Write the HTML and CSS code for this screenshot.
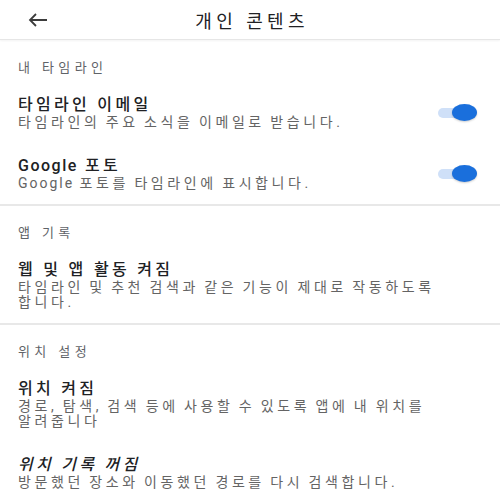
FILE: index.html
```html
<!DOCTYPE html>
<html lang="ko">
<head>
<meta charset="utf-8">
<link rel="stylesheet" href="styles.css">
</head>
<body>
<header class="appbar">
  <div class="back">
    <svg width="20" height="14" viewBox="0 0 20 14"><path d="M19 7H2M8 1L2 7l6 6" fill="none" stroke="#3c3c3c" stroke-width="1.8"/></svg>
  </div>
  <div class="title">개인 콘텐츠</div>
  <div></div>
</header>

<section class="section first">
  <div class="label">내 타임라인</div>
  <div class="item">
    <div class="text">
      <div class="item-title">타임라인 이메일</div>
      <div class="item-sub">타임라인의 주요 소식을 이메일로 받습니다.</div>
    </div>
    <div class="switch"><span class="track"></span><span class="thumb"></span></div>
  </div>
  <div class="item">
    <div class="text">
      <div class="item-title"><span class="latin">Google</span> 포토</div>
      <div class="item-sub"><span class="latin-sub">Google</span> 포토를 타임라인에 표시합니다.</div>
    </div>
    <div class="switch"><span class="track"></span><span class="thumb"></span></div>
  </div>
</section>

<section class="section">
  <div class="label">앱 기록</div>
  <div class="item">
    <div class="text">
      <div class="item-title">웹 및 앱 활동 켜짐</div>
      <div class="item-sub">타임라인 및 추천 검색과 같은 기능이 제대로 작동하도록<br>합니다.</div>
    </div>
  </div>
</section>

<section class="section">
  <div class="label">위치 설정</div>
  <div class="item">
    <div class="text">
      <div class="item-title">위치 켜짐</div>
      <div class="item-sub">경로, 탐색, 검색 등에 사용할 수 있도록 앱에 내 위치를<br>알려줍니다</div>
    </div>
  </div>
  <div class="item">
    <div class="text">
      <div class="item-title italic">위치 기록 꺼짐</div>
      <div class="item-sub">방문했던 장소와 이동했던 경로를 다시 검색합니다.</div>
    </div>
  </div>
</section>
</body>
</html>
```
FILE: styles.css
```css
html, body {
  margin: 0;
  padding: 0;
  background: #ffffff;
  font-family: Roboto, "Noto Sans CJK KR", sans-serif;
  color: #202124;
  width: 500px;
  height: 500px;
  overflow: hidden;
}
.appbar {
  display: grid;
  grid-template-columns: 1fr auto 1fr;
  align-items: center;
  height: 39px;
  border-bottom: 1px solid #e6e6e6;
  box-shadow: 0 1px 2px rgba(0,0,0,0.05);
}
.back {
  padding-left: 28px;
  display: flex;
  align-items: center;
  padding-top: 1px;
}
.title {
  font-size: 18px;
  letter-spacing: 4.4px;
  margin-right: -4.4px;
  color: #202124;
}
.section {
  padding: 18px 18px 0 18px;
  border-bottom: 2px solid #e8e8e8;
}
.section.first {
  padding-top: 19px;
}
.section:last-child {
  border-bottom: none;
}
.label {
  font-size: 13px;
  color: #5f6368;
  letter-spacing: 4.4px;
  line-height: 18px;
  margin-bottom: 18px;
}
.item {
  display: flex;
  align-items: center;
  justify-content: space-between;
  padding-bottom: 26px;
}
.item:last-child {
  padding-bottom: 13px;
}
.item-title {
  font-size: 16px;
  font-weight: 500;
  line-height: 20px;
  letter-spacing: 3.3px;
  color: #202124;
}
.item-title .latin {
  letter-spacing: 1.5px;
}
.item-title.italic {
  font-style: italic;
}
.item-sub {
  font-size: 14px;
  line-height: 15px;
  letter-spacing: 3.6px;
  word-spacing: -1.7px;
  color: #646464;
}
.item-sub .latin-sub {
  letter-spacing: 2px;
}
.switch {
  position: relative;
  width: 40px;
  height: 18px;
  margin-right: 4px;
}
.track {
  position: absolute;
  left: 0;
  top: 4px;
  width: 32px;
  height: 10px;
  border-radius: 5px;
  background: #cfe0f8;
}
.thumb {
  position: absolute;
  left: 14px;
  top: 0;
  width: 25px;
  height: 17px;
  border-radius: 50%;
  background: #1a6fdc;
  box-shadow: 0 1px 2px rgba(0,0,0,0.2);
}
```
